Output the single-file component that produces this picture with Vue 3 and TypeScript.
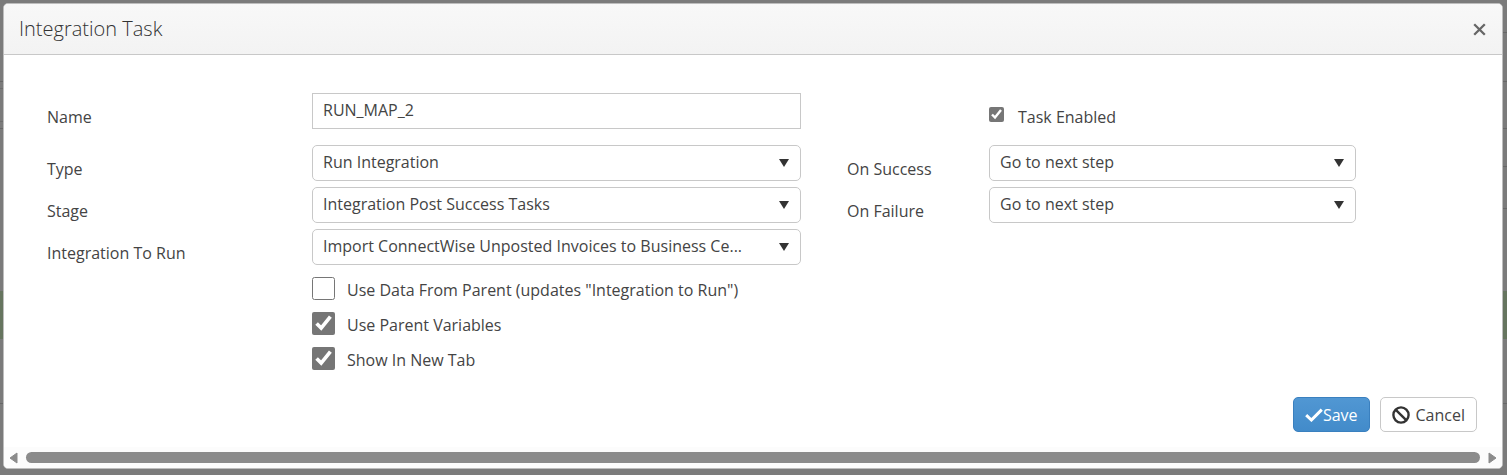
<script setup lang="ts">
import { reactive } from 'vue'

interface SelectField {
  id: 'type' | 'stage' | 'integration' | 'success' | 'failure'
  label: string
  options: string[]
}

const leftFields: SelectField[] = [
  { id: 'type', label: 'Type', options: ['Run Integration'] },
  { id: 'stage', label: 'Stage', options: ['Integration Post Success Tasks'] },
  {
    id: 'integration',
    label: 'Integration To Run',
    options: ['Import ConnectWise Unposted Invoices to Business Ce...'],
  },
]

const rightFields: SelectField[] = [
  { id: 'success', label: 'On Success', options: ['Go to next step'] },
  { id: 'failure', label: 'On Failure', options: ['Go to next step'] },
]

const task = reactive({
  name: 'RUN_MAP_2',
  enabled: true,
  type: 'Run Integration',
  stage: 'Integration Post Success Tasks',
  integration: 'Import ConnectWise Unposted Invoices to Business Ce...',
  success: 'Go to next step',
  failure: 'Go to next step',
})

const flags = reactive([
  { id: 'parent-data', label: 'Use Data From Parent (updates "Integration to Run")', checked: false },
  { id: 'parent-vars', label: 'Use Parent Variables', checked: true },
  { id: 'new-tab', label: 'Show In New Tab', checked: true },
])
</script>

<template>
  <div class="backdrop">
    <section class="dialog" role="dialog" aria-labelledby="dialog-title">
      <header class="header">
        <h1 id="dialog-title" class="title">Integration Task</h1>
        <button class="close" type="button" aria-label="Close">
          <svg width="13" height="13" viewBox="0 0 13 13" aria-hidden="true">
            <path d="M1.2 1.2 11.8 11.8M11.8 1.2 1.2 11.8" stroke="#666" stroke-width="2.3" fill="none" />
          </svg>
        </button>
      </header>

      <form class="form" @submit.prevent>
        <div class="columns">
          <div class="column left">
            <div class="row name-row">
              <label class="label" for="name">Name</label>
              <input id="name" v-model="task.name" class="field" type="text" />
            </div>
            <div v-for="f in leftFields" :key="f.id" class="row">
              <label class="label" :for="f.id">{{ f.label }}</label>
              <div class="select">
                <select :id="f.id" v-model="task[f.id]" class="field">
                  <option v-for="o in f.options" :key="o">{{ o }}</option>
                </select>
                <svg class="arrow" width="10" height="8" viewBox="0 0 10 8" aria-hidden="true">
                  <path d="M0 0H10L5 8Z" fill="#333" />
                </svg>
              </div>
            </div>
            <div class="flags">
              <div v-for="flag in flags" :key="flag.id" class="flag">
                <input :id="flag.id" v-model="flag.checked" class="check" type="checkbox" />
                <label class="flag-label" :for="flag.id">{{ flag.label }}</label>
              </div>
            </div>
          </div>

          <div class="column right">
            <div class="row name-row">
              <div class="enabled">
                <input id="enabled" v-model="task.enabled" class="check small" type="checkbox" />
                <label class="label" for="enabled">Task Enabled</label>
              </div>
            </div>
            <div v-for="f in rightFields" :key="f.id" class="row">
              <label class="label" :for="f.id">{{ f.label }}</label>
              <div class="select">
                <select :id="f.id" v-model="task[f.id]" class="field">
                  <option v-for="o in f.options" :key="o">{{ o }}</option>
                </select>
                <svg class="arrow" width="10" height="8" viewBox="0 0 10 8" aria-hidden="true">
                  <path d="M0 0H10L5 8Z" fill="#333" />
                </svg>
              </div>
            </div>
          </div>
        </div>

        <div class="actions">
          <button class="btn primary" type="submit">
            <svg width="18" height="14" viewBox="0 0 18 14" aria-hidden="true">
              <path d="M1.2 7.2 6.4 12 16.8 1.6" stroke="#fff" stroke-width="3" fill="none" />
            </svg>
            <span>Save</span>
          </button>
          <button class="btn cancel" type="button">
            <svg width="18" height="18" viewBox="0 0 18 18" aria-hidden="true">
              <circle cx="9" cy="9" r="7.6" stroke="#333" stroke-width="2.4" fill="none" />
              <path d="M3.6 3.6 14.4 14.4" stroke="#333" stroke-width="2.4" />
            </svg>
            <span>Cancel</span>
          </button>
        </div>
      </form>

      <div class="scrollbar" aria-hidden="true">
        <svg width="10" height="12" viewBox="0 0 10 12">
          <path d="M8 1V11L1 6Z" fill="#8b8b8b" stroke="#8b8b8b" stroke-linejoin="round" />
        </svg>
        <div class="thumb"></div>
        <svg width="10" height="12" viewBox="0 0 10 12">
          <path d="M2 1V11L9 6Z" fill="#8b8b8b" stroke="#8b8b8b" stroke-linejoin="round" />
        </svg>
      </div>
    </section>
  </div>
</template>

<style>
body {
  margin: 0;
  background: #7b7b7b;
}
</style>

<style scoped>
* {
  box-sizing: border-box;
}

.backdrop {
  display: flex;
  min-height: 100vh;
  padding: 3px 4px 6px 3px;
  font: 16px/24px 'Open Sans', 'Noto Sans', sans-serif;
  color: #444;
  background:
    linear-gradient(
      transparent 81px, #676767 81px 82px, transparent 82px 88px, #6d6d6d 88px 89px,
      transparent 89px 121px, #6d6d6d 121px 122px, transparent 122px 128px, #676767 128px 129px,
      transparent 129px 291px, #66755f 291px 339px, transparent 339px 403px, #676767 403px 404px,
      transparent 404px
    ) left / 50% 100% no-repeat,
    linear-gradient(
      transparent 32px, #676767 32px 33px, transparent 33px 81px, #676767 81px 82px,
      transparent 82px 128px, #676767 128px 129px, transparent 129px 166px, #676767 166px 167px,
      transparent 167px 208px, #676767 208px 209px, transparent 209px 291px, #66755f 291px 339px,
      transparent 339px 403px, #676767 403px 404px, transparent 404px
    ) right / 50% 100% no-repeat,
    #7b7b7b;
}

.dialog {
  display: flex;
  flex: 1;
  flex-direction: column;
  min-width: 0;
  overflow: hidden;
  background: #fff;
  border: 1px solid #bdbdbd;
  border-radius: 5px;
}

.header {
  display: flex;
  align-items: center;
  justify-content: space-between;
  height: 51px;
  padding: 0 16px 0 15px;
  background: linear-gradient(#f8f8f8, #f3f3f3);
  border-bottom: 1px solid #c8c8c8;
}

.title {
  margin: 0;
  font-size: 20px;
  font-weight: 350;
  line-height: 28px;
  color: #333;
}

.close {
  display: flex;
  padding: 0;
  background: none;
  border: 0;
}

.form {
  display: flex;
  flex: 1;
  flex-direction: column;
  padding: 38px 25px 15px 43px;
}

.columns {
  display: grid;
  grid-template-columns: minmax(0, 754fr) minmax(0, 509fr);
  column-gap: 46px;
  padding-right: 121px;
}

.column {
  display: flex;
  flex-direction: column;
  gap: 6px;
}

.row {
  display: grid;
  align-items: start;
}

.left .row {
  grid-template-columns: 265px minmax(0, 1fr);
}

.right .row {
  grid-template-columns: 142px minmax(0, 1fr);
}

.name-row {
  min-height: 46px;
}

.label {
  padding-top: 12px;
}

.field {
  width: 100%;
  height: 36px;
  margin: 0;
  padding: 0 10px 2px;
  font: inherit;
  color: #444;
  background: #fff;
  border: 1px solid #c8c8c8;
  border-radius: 0;
  appearance: none;
}

.select {
  display: grid;
  align-items: center;
}

.select .field,
.arrow {
  grid-area: 1 / 1;
}

.select .field {
  border-radius: 5px;
}

.arrow {
  justify-self: end;
  margin-right: 12px;
  pointer-events: none;
}

.flags {
  padding-left: 265px;
}

.flag {
  display: flex;
  align-items: center;
  gap: 12px;
  height: 35px;
}

.flag-label {
  padding-top: 2px;
}

.check {
  flex: none;
  width: 23px;
  height: 23px;
  margin: 0;
  accent-color: #767676;
}

.small {
  width: 15px;
  height: 15px;
  margin-top: 14px;
}

.enabled {
  display: flex;
  grid-column: 2;
  gap: 14px;
}

.actions {
  display: flex;
  gap: 10px;
  justify-content: flex-end;
  margin-top: 21px;
}

.btn {
  display: flex;
  align-items: center;
  height: 35px;
  padding: 0 11px;
  font: inherit;
  color: #444;
  background: #fff;
  border: 1px solid #c8c8c8;
  border-radius: 5px;
}

.cancel {
  gap: 6px;
}

.primary {
  color: #fff;
  background: linear-gradient(#5197d3, #428bca);
  border-color: #3a80bf;
}

.scrollbar {
  display: flex;
  gap: 7px;
  align-items: center;
  height: 21px;
  padding: 0 5px;
  background: #fcfcfc;
}

.thumb {
  flex: 1;
  height: 11px;
  background: #8b8b8b;
  border-radius: 6px;
}
</style>
